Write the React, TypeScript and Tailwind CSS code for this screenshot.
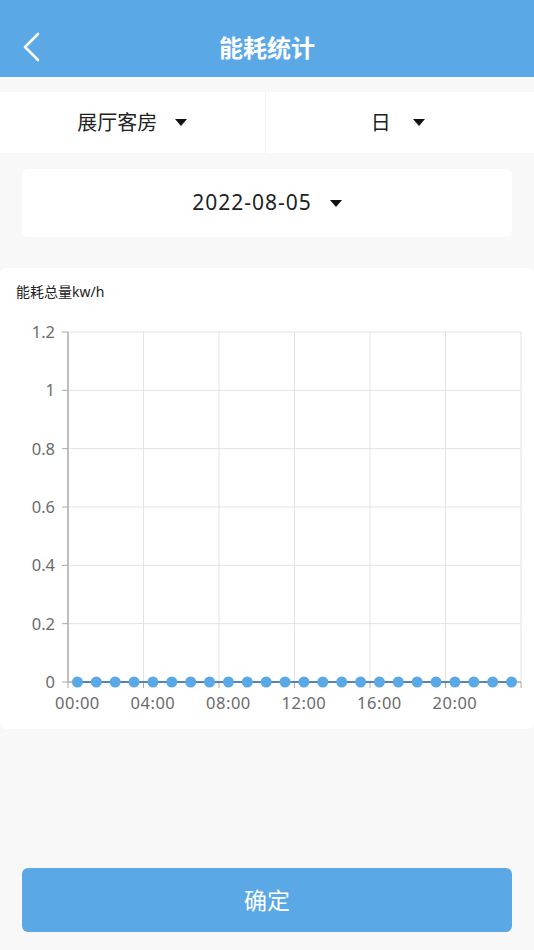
const FONT = '"Noto Sans", "Noto Sans CJK SC", sans-serif';

const BLUE = '#5aa8e6';

function Caret() {
  return (
    <svg width="12" height="7" viewBox="0 0 12 7" className="shrink-0">
      <path d="M0 0 H12 L6 7 Z" fill="#111" />
    </svg>
  );
}

// chart geometry (svg coords, top of svg = page y 302)
const X0 = 68;
const X1 = 521;
const YTOP = 30;
const YBOT = 380;
const CATS = 24;
const step = (X1 - X0) / CATS;
const yTicks = ['0', '0.2', '0.4', '0.6', '0.8', '1', '1.2'];

function Chart() {
  const rowH = (YBOT - YTOP) / 6;
  const vLines = [0, 4, 8, 12, 16, 20, 24].map((i) => X0 + i * step);
  const pts = Array.from({ length: CATS }, (_, i) => X0 + step * (i + 0.5));
  return (
    <svg width="534" height="427" viewBox="0 0 534 427" className="block">
      {/* horizontal grid */}
      {yTicks.map((t, i) => {
        const y = YBOT - i * rowH;
        return (
          <g key={t}>
            {i > 0 && <line x1={X0} x2={X1} y1={y} y2={y} stroke="#e3e3e3" strokeWidth="1" />}
            <line x1={X0 - 6} x2={X0} y1={y} y2={y} stroke="#aaa" strokeWidth="1" />
            <text
              x={X0 - 13}
              y={y + 6}
              textAnchor="end"
              fontSize="16.5"
              fill="#6b6b6b"
              fontFamily={FONT}
            >
              {t}
            </text>
          </g>
        );
      })}
      {/* vertical grid */}
      {vLines.map((x, i) => (
        <g key={i}>
          {i > 0 && <line x1={x} x2={x} y1={YTOP} y2={YBOT} stroke="#e3e3e3" strokeWidth="1" />}
          <line x1={x} x2={x} y1={YBOT} y2={YBOT + 6} stroke="#aaa" strokeWidth="1" />
        </g>
      ))}
      {/* axes */}
      <line x1={X0} x2={X0} y1={YTOP} y2={YBOT} stroke="#aaa" strokeWidth="1.5" />
      <line x1={X0} x2={X1} y1={YBOT} y2={YBOT} stroke="#aaa" strokeWidth="1.5" />
      {/* x labels */}
      {['00:00', '04:00', '08:00', '12:00', '16:00', '20:00'].map((l, i) => (
        <text
          key={l}
          x={X0 + step * (i * 4 + 0.5)}
          y={YBOT + 27}
          textAnchor="middle"
          fontSize="16.5"
          letterSpacing="0.5"
          fill="#6b6b6b"
          fontFamily={FONT}
        >
          {l}
        </text>
      ))}
      {/* series */}
      <line x1={pts[0]} x2={pts[pts.length - 1]} y1={YBOT} y2={YBOT} stroke="#5a82ad" strokeWidth="2" />
      {pts.map((x, i) => (
        <circle key={i} cx={x} cy={YBOT} r="5.5" fill={BLUE} />
      ))}
    </svg>
  );
}

export default function App() {
  return (
    <div className="w-[534px] h-[950px] bg-[#f8f8f8] flex flex-col" style={{ fontFamily: FONT }}>
      {/* Header */}
      <header className="h-[77px] bg-[#5aa8e6] flex items-end pb-[13px] relative shrink-0">
        <button className="absolute left-[20px] top-[31px] w-[22px] h-[32px] flex items-center justify-center">
          <svg width="18" height="30" viewBox="0 0 18 30">
            <path d="M16 2 L3 15 L16 28" fill="none" stroke="#fff" strokeWidth="2.6" strokeLinecap="round" strokeLinejoin="round" />
          </svg>
        </button>
        <h1 className="flex-1 text-center text-white text-[24px] leading-[32px] font-bold">能耗统计</h1>
      </header>

      {/* Selector tabs */}
      <div className="mt-[15px] h-[61px] bg-white flex shrink-0">
        <div className="flex-1 flex items-center justify-center gap-[18px] border-r border-[#f2f2f2]">
          <span className="text-[20px] text-[#222]">展厅客房</span>
          <Caret />
        </div>
        <div className="flex-1 flex items-center justify-center gap-[22px] pr-[4px]">
          <span className="text-[20px] text-[#222]">日</span>
          <Caret />
        </div>
      </div>

      {/* Date */}
      <div className="mt-[16px] mx-[22px] h-[68px] bg-white rounded-md flex items-center justify-center gap-[18px] shrink-0">
        <span className="text-[21px] text-[#222] tracking-[1px]">2022-08-05</span>
        <Caret />
      </div>

      {/* Chart */}
      <div className="mt-[31px] bg-white rounded-md h-[461px] shrink-0 flex flex-col">
        <div className="h-[34px] pt-[15px] pl-[16px] text-[14px] leading-[18px] text-[#222]">能耗总量kw/h</div>
        <Chart />
      </div>

      {/* Confirm */}
      <button className="mt-[139px] mx-[22px] h-[64px] bg-[#5aa8e6] rounded-md text-white text-[23px] shrink-0">
        确定
      </button>
    </div>
  );
}
